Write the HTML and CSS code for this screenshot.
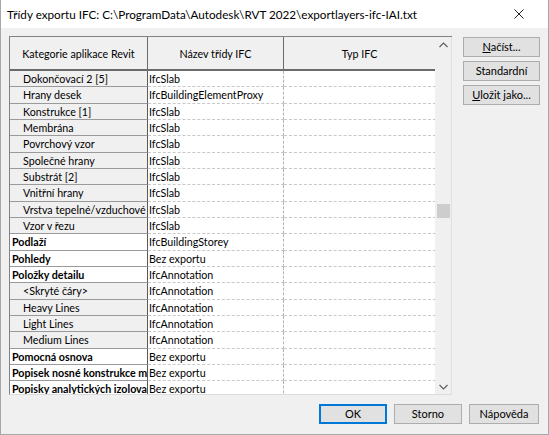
FILE: index.html
```html
<!DOCTYPE html>
<html lang="cs">
<head>
<meta charset="utf-8">
<title>Třídy exportu IFC</title>
<link rel="stylesheet" href="styles.css">
</head>
<body>
<div class="window">
  <div class="titlebar">
    <span class="title">Třídy exportu IFC: C:\ProgramData\Autodesk\RVT 2022\exportlayers-ifc-IAI.txt</span>
    <span class="close">
      <svg width="10" height="10" viewBox="0 0 10 10"><path d="M0.5 0.5 L9.5 9.5 M9.5 0.5 L0.5 9.5" stroke="#222" stroke-width="1" fill="none"/></svg>
    </span>
  </div>
  <div class="content">
    <div class="main">
      <div class="grid">
        <div class="gridbody">
          <div class="head">
            <div class="hcell">Kategorie aplikace Revit</div>
            <div class="hcell">Název třídy IFC</div>
            <div class="hcell">Typ IFC</div>
          </div>
          <div class="rows">
            <div class="row sub"><div class="c1">Dokončovací 2 [5]</div><div class="c2">IfcSlab</div><div class="c3"></div></div>
            <div class="row sub"><div class="c1">Hrany desek</div><div class="c2">IfcBuildingElementProxy</div><div class="c3"></div></div>
            <div class="row sub"><div class="c1">Konstrukce [1]</div><div class="c2">IfcSlab</div><div class="c3"></div></div>
            <div class="row sub"><div class="c1">Membrána</div><div class="c2">IfcSlab</div><div class="c3"></div></div>
            <div class="row sub"><div class="c1">Povrchový vzor</div><div class="c2">IfcSlab</div><div class="c3"></div></div>
            <div class="row sub"><div class="c1">Společné hrany</div><div class="c2">IfcSlab</div><div class="c3"></div></div>
            <div class="row sub"><div class="c1">Substrát [2]</div><div class="c2">IfcSlab</div><div class="c3"></div></div>
            <div class="row sub"><div class="c1">Vnitřní hrany</div><div class="c2">IfcSlab</div><div class="c3"></div></div>
            <div class="row sub"><div class="c1">Vrstva tepelné/vzduchové izolace</div><div class="c2">IfcSlab</div><div class="c3"></div></div>
            <div class="row sub"><div class="c1">Vzor v řezu</div><div class="c2">IfcSlab</div><div class="c3"></div></div>
            <div class="row cat"><div class="c1">Podlaží</div><div class="c2">IfcBuildingStorey</div><div class="c3"></div></div>
            <div class="row cat"><div class="c1">Pohledy</div><div class="c2">Bez exportu</div><div class="c3"></div></div>
            <div class="row cat"><div class="c1">Položky detailu</div><div class="c2">IfcAnnotation</div><div class="c3"></div></div>
            <div class="row sub"><div class="c1">&lt;Skryté čáry&gt;</div><div class="c2">IfcAnnotation</div><div class="c3"></div></div>
            <div class="row sub"><div class="c1">Heavy Lines</div><div class="c2">IfcAnnotation</div><div class="c3"></div></div>
            <div class="row sub"><div class="c1">Light Lines</div><div class="c2">IfcAnnotation</div><div class="c3"></div></div>
            <div class="row sub"><div class="c1">Medium Lines</div><div class="c2">IfcAnnotation</div><div class="c3"></div></div>
            <div class="row cat"><div class="c1">Pomocná osnova</div><div class="c2">Bez exportu</div><div class="c3"></div></div>
            <div class="row cat"><div class="c1">Popisek nosné konstrukce mostu</div><div class="c2">Bez exportu</div><div class="c3"></div></div>
            <div class="row cat"><div class="c1">Popisky analytických izolovaných základů</div><div class="c2">Bez exportu</div><div class="c3"></div></div>
          </div>
        </div>
        <div class="vscroll">
          <div class="arrow">
            <svg width="9" height="6" viewBox="0 0 9 6"><path d="M0.5 5 L4.5 1 L8.5 5" stroke="#606060" stroke-width="1.2" fill="none"/></svg>
          </div>
          <div class="track"><div class="thumb"></div></div>
          <div class="arrow">
            <svg width="9" height="6" viewBox="0 0 9 6"><path d="M0.5 1 L4.5 5 L8.5 1" stroke="#606060" stroke-width="1.2" fill="none"/></svg>
          </div>
        </div>
      </div>
      <div class="side">
        <button class="btn"><u>N</u>ačíst...</button>
        <button class="btn">Standardní</button>
        <button class="btn"><u>U</u>ložit jako...</button>
      </div>
    </div>
    <div class="footer">
      <button class="btn fbtn default">OK</button>
      <button class="btn fbtn">Storno</button>
      <button class="btn fbtn help">Nápověda</button>
    </div>
  </div>
</div>
</body>
</html>
```

FILE: styles.css
```css
html, body {
  margin: 0;
  padding: 0;
}
body {
  width: 549px;
  height: 435px;
  overflow: hidden;
  font-family: Lato, "Noto Sans", sans-serif;
  font-size: 10.7px;
  color: #000;
  background: #f0f0f0;
}
.window {
  box-sizing: border-box;
  width: 549px;
  height: 435px;
  border: 1px solid #a8a8a8;
  border-top: none;
  display: flex;
  flex-direction: column;
  background: #f0f0f0;
}
.titlebar {
  height: 28px;
  flex: none;
  background: #ffffff;
  display: flex;
  align-items: center;
  justify-content: space-between;
  padding: 0 24px 0 6px;
}
.title {
  font-size: 11.7px;
  white-space: nowrap;
}
.close {
  display: flex;
  align-items: center;
}
.content {
  flex: 1;
  display: flex;
  flex-direction: column;
  padding: 8px 8px 0 8px;
}
.main {
  display: flex;
  gap: 11px;
}
.grid {
  box-sizing: border-box;
  width: 443px;
  height: 359px;
  border-top: 1px solid #828282;
  border-left: 1px solid #828282;
  border-bottom: 1px solid #dcdcdc;
  display: flex;
  background: #ababab;
}
.gridbody {
  width: 426px;
  overflow: hidden;
  background: #ffffff;
}
.head {
  display: grid;
  grid-template-columns: 138px 136px 152px;
  height: 34px;
  box-sizing: border-box;
  border-bottom: 2px solid #6b6b6b;
  background: #f0f0f0;
}
.hcell {
  display: flex;
  align-items: center;
  justify-content: center;
  border-right: 1px solid #6b6b6b;
  padding-top: 1px;
}
.rows {
  display: flex;
  flex-direction: column;
}
.row {
  display: grid;
  grid-template-columns: 138px 136px 152px;
  height: 16.33px;
  box-sizing: border-box;
}
.c1, .c2, .c3 {
  box-sizing: border-box;
  white-space: nowrap;
  overflow: hidden;
  text-overflow: clip;
  line-height: 15px;
}
.c1 {
  border-right: 1px solid #5a5a5a;
  border-bottom: 1px solid #9a9a9a;
  background: #f0f0f0;
}
.sub .c1 {
  padding-left: 13px;
}
.cat .c1 {
  padding-left: 2px;
  font-weight: bold;
  background: #ffffff;
}
.c2 {
  padding-left: 1px;
  border-right: 1px dashed #b4b4b4;
  border-bottom: 1px dashed #c8c8c8;
}
.c3 {
  border-bottom: 1px dashed #c8c8c8;
}
.vscroll {
  width: 16px;
  background: #f0f0f0;
  display: flex;
  flex-direction: column;
  border-right: 1px solid #e0e0e0;
}
.arrow {
  height: 15px;
  display: flex;
  align-items: center;
  justify-content: center;
}
.track {
  flex: 1;
  display: flex;
  flex-direction: column;
  padding-top: 152px;
  align-items: center;
}
.thumb {
  width: 13px;
  height: 14px;
  background: #cdcdcd;
}
.side {
  display: flex;
  flex-direction: column;
  gap: 4px;
  padding-top: 1px;
}
.btn {
  box-sizing: border-box;
  font-family: Lato, "Noto Sans", sans-serif;
  font-size: 11px;
  color: #000;
  background: #e1e1e1;
  border: 1px solid #adadad;
  border-radius: 0;
  height: 20px;
  width: 77px;
  padding: 0;
  margin: 0;
  line-height: 16px;
}
.footer {
  display: flex;
  justify-content: flex-end;
  gap: 7px;
  padding-top: 9px;
  padding-right: 1px;
}
.fbtn {
  width: 68px;
}
.help {
  width: 70px;
}
.default {
  border: 2px solid #0078d7;
}
```
